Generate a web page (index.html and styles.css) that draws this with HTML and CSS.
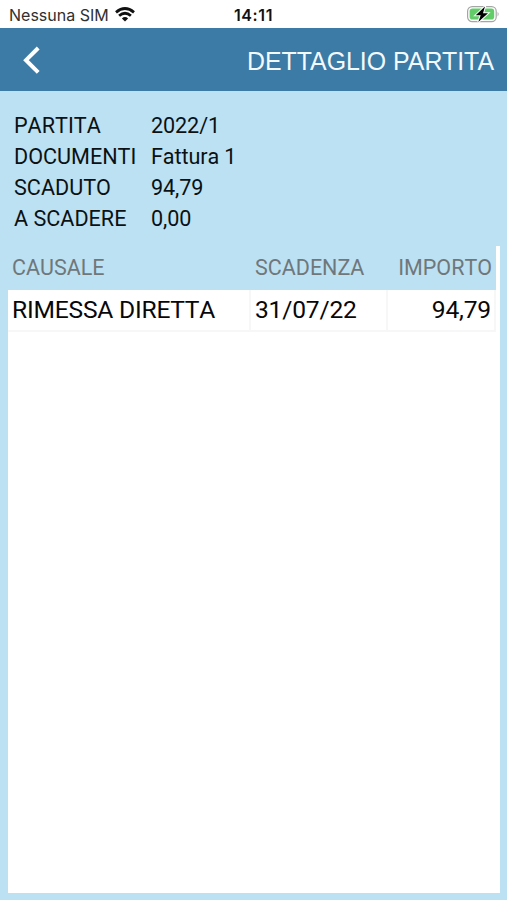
FILE: index.html
```html
<!DOCTYPE html>
<html lang="it">
<head>
<meta charset="utf-8">
<title>Dettaglio partita</title>
<link rel="stylesheet" href="styles.css">
</head>
<body>
<div class="status">
  <div class="carrier"><span>Nessuna SIM</span>
    <svg class="wifi" viewBox="0 0 20 15" width="20" height="15"><g fill="none" stroke="#111" stroke-width="2.8"><path d="M1 5.3Q10-2.2 19 5.3"/><path d="M4.1 8.8Q10 3.8 15.9 8.8"/></g><path d="M6.9 11.5Q10 8.7 13.1 11.5L10 14.6Z" fill="#111"/></svg>
  </div>
  <time class="clock">14:11</time>
  <svg class="battery" viewBox="0 0 34 18" width="34" height="18"><rect x="1.6" y="1.6" width="28.6" height="15" rx="4.6" fill="#fff" stroke="#a5a5a5" stroke-width="1.2"/><rect x="3.6" y="3.6" width="24.6" height="11" rx="2.8" fill="#62cd68"/><path d="M31.6 6.8Q33.6 9.1 31.6 11.4Z" fill="#a5a5a5"/><path d="M19 1.6L9.7 10.2h5l-2.4 6.8L22 8.2h-5Z" fill="#000" stroke="#fff" stroke-width="2" paint-order="stroke"/></svg>
</div>
<header class="bar">
  <svg class="back" viewBox="0 0 18 28" width="18" height="28"><path d="M16.2 2L4 14.2L16.2 26.4" fill="none" stroke="#fff" stroke-width="4"/></svg>
  <h1>DETTAGLIO PARTITA</h1>
</header>
<main>
  <dl class="summary">
    <dt>PARTITA</dt><dd>2022/1</dd>
    <dt>DOCUMENTI</dt><dd>Fattura 1</dd>
    <dt>SCADUTO</dt><dd>94,79</dd>
    <dt>A SCADERE</dt><dd>0,00</dd>
  </dl>
  <section class="table">
    <div class="row head"><span>CAUSALE</span><span>SCADENZA</span><span class="num">IMPORTO</span></div>
    <div class="row data"><span>RIMESSA DIRETTA</span><span>31/07/22</span><span class="num">94,79</span></div>
  </section>
</main>
</body>
</html>
```
FILE: styles.css
```css
* { box-sizing: border-box; }
body { margin: 0; width: 507px; height: 900px; display: flex; flex-direction: column; background: #bce1f2; color: #0b1114; font-family: Roboto, sans-serif; font-kerning: none; overflow: hidden; }
.status { height: 28px; flex: none; background: #fff; display: grid; grid-template-columns: 1fr auto 1fr; align-items: center; padding: 1px 7px 0 9px; }
.carrier { display: flex; align-items: center; gap: 7px; font: 16px/26px Inter, sans-serif; font-kerning: normal; color: #303030; white-space: nowrap; }
.wifi { margin: -1px 0 0 -1px; }
.clock { font: 600 16px/26px Inter, sans-serif; letter-spacing: 0.6px; color: #111; margin-left: -2px; }
.battery { justify-self: end; margin-top: -2px; }
.bar { height: 63px; flex: none; background: #3c7ba5; display: flex; align-items: center; justify-content: space-between; padding: 0 13px 0 21px; }
.bar h1 { margin: 3px 0 0; font: 400 24.9px/30px "Liberation Sans", sans-serif; font-kerning: normal; color: #f3faff; }
.back { margin-left: 1px; }
main { flex: 1; display: flex; flex-direction: column; padding: 19px 7px 7px 8px; }
.summary { margin: 0 0 12px; padding-left: 6px; display: grid; grid-template-columns: 137px 1fr; grid-auto-rows: 31px; font-size: 21.6px; line-height: 31px; }
.summary dd { margin: 0; letter-spacing: -0.1px; }
.table { flex: 1; background: #fff; }
.row { display: grid; grid-template-columns: 243px 137px 108px; width: 488px; white-space: nowrap; }
.row span { padding: 0 4px; }
.row .num { text-align: right; }
.head { height: 44px; background: #bce1f2; color: #70777a; font-size: 21.5px; line-height: 44px; }
.data { height: 42px; font-size: 24.6px; letter-spacing: -0.2px; line-height: 40px; color: #080808; border-bottom: 2px solid #f7f7f7; }
.data span { border-right: 2px solid #f7f7f7; }
.data .num { padding-right: 3px; }
```
